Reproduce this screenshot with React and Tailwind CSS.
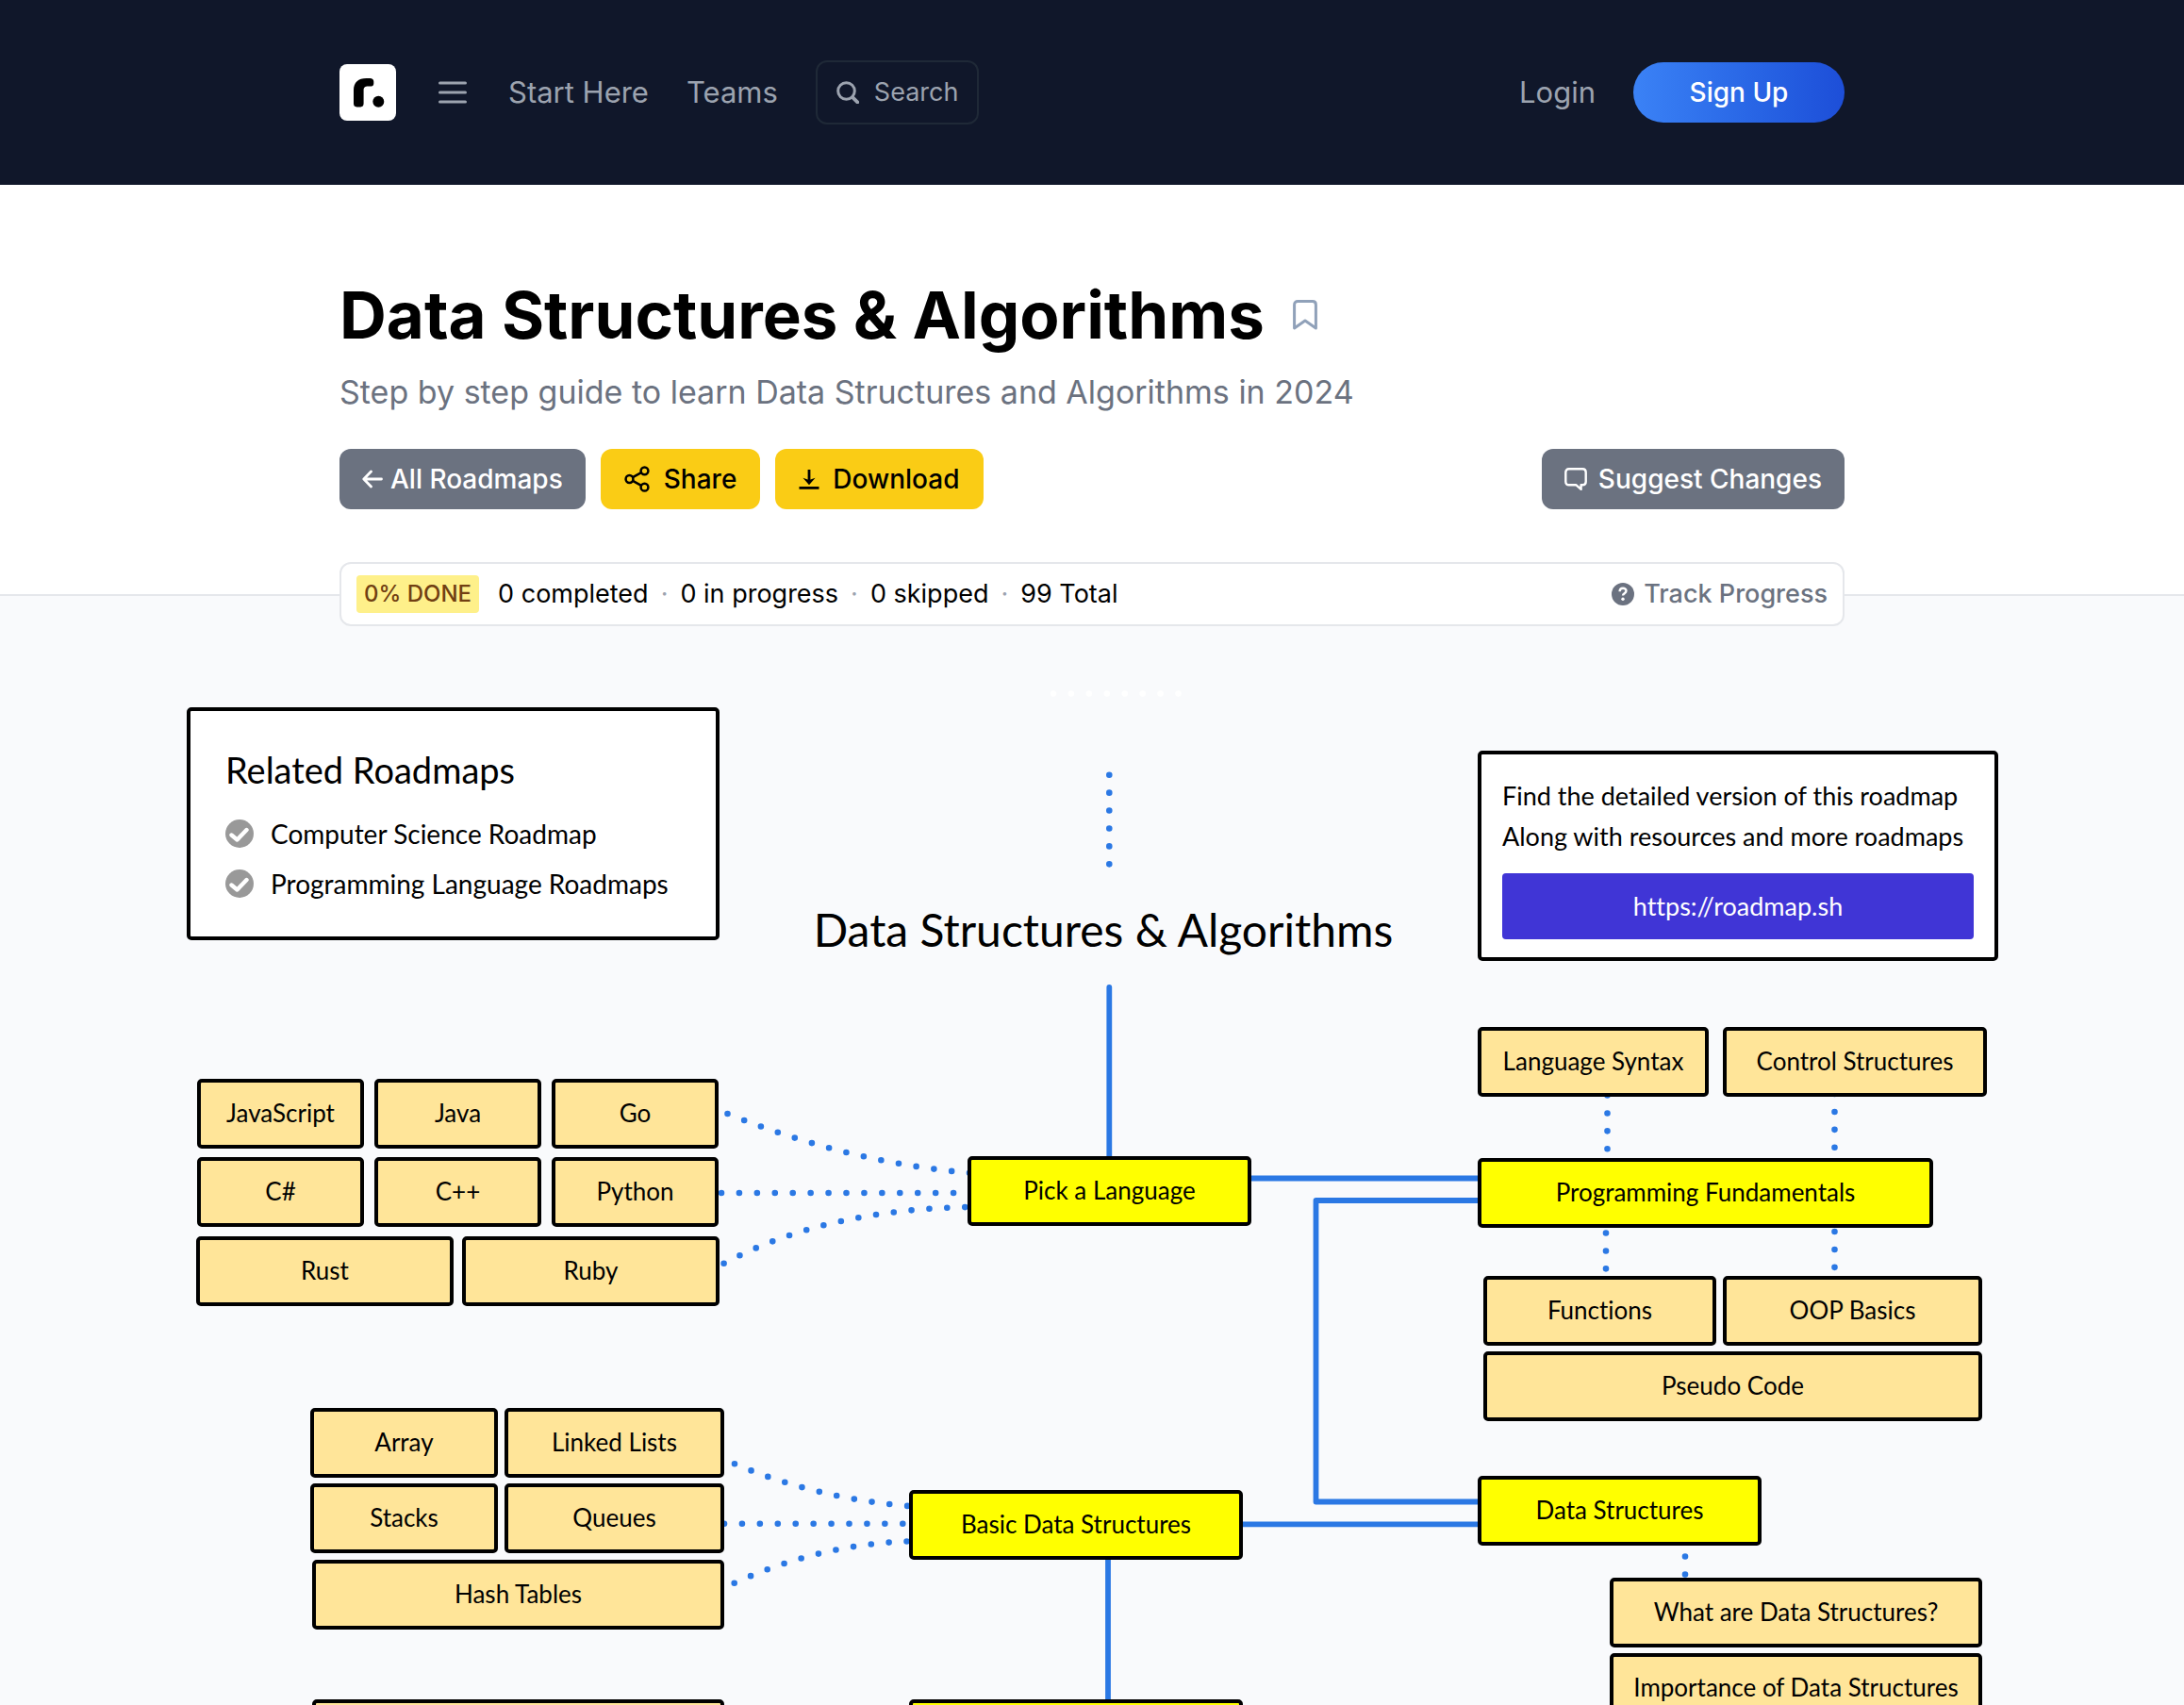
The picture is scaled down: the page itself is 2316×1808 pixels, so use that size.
import React from "react";

const SANS = "font-['Inter',sans-serif]";
const HAND = "font-['Lato',sans-serif] [font-variant-ligatures:none]";

function Logo() {
  return (
    <svg viewBox="0 0 60 60" className="size-[60px]" role="img" aria-label="roadmap.sh">
      <rect width="60" height="60" rx="8" fill="#fff" />
      <path
        fill="#000"
        d="M15 27.500C15 19.500 20 15 28.500 15h3.800c2.500 0 4 1.300 4 3.600v1.800c0 2.300-1.500 3.200-3.800 3.200h-2.300c-3 0-4.600 1-4.600 4.200v14c0 2.200-1.100 3.600-3.300 3.600h-3.900c-2.300 0-3.400-1.400-3.400-3.600z"
      />
      <circle cx="41.300" cy="39.800" r="6" fill="#000" />
    </svg>
  );
}

function MenuIcon() {
  return (
    <svg viewBox="0 0 30 26" className="h-[26px] w-[30px]" stroke="currentColor" strokeWidth="3" strokeLinecap="round" aria-hidden="true">
      <path d="M1.500 3h27M1.500 13h27M1.500 23h27" />
    </svg>
  );
}

function SearchIcon() {
  return (
    <svg viewBox="0 0 24 24" className="size-6" fill="none" stroke="currentColor" strokeWidth="3" strokeLinecap="round" aria-hidden="true">
      <circle cx="10.500" cy="10.500" r="8.800" />
      <path d="M17 17.200l5.300 5.200" strokeWidth="3.800" />
    </svg>
  );
}

function BookmarkIcon() {
  return (
    <svg viewBox="0 0 26 32" className="h-8 w-[26px]" fill="none" stroke="currentColor" strokeWidth="3" strokeLinecap="round" strokeLinejoin="round" aria-hidden="true">
      <path d="M1.600 30V5.200c0-2.200 1.300-3.600 3.600-3.600h15.600c2.300 0 3.600 1.400 3.600 3.600V30L13 22z" />
    </svg>
  );
}

function ArrowLeftIcon() {
  return (
    <svg viewBox="0 0 22 20" className="h-5 w-[22px]" fill="none" stroke="currentColor" strokeWidth="2.800" strokeLinecap="round" strokeLinejoin="round" aria-hidden="true">
      <path d="M9.500 2L1.800 10l7.700 8M2 10h18.500" />
    </svg>
  );
}

function ShareIcon() {
  return (
    <svg viewBox="0 0 28 28" className="size-7" fill="none" stroke="currentColor" strokeWidth="2.500" aria-hidden="true">
      <circle cx="5.500" cy="14" r="3.900" />
      <circle cx="21.500" cy="5.300" r="3.900" />
      <circle cx="21.500" cy="22.700" r="3.900" />
      <path d="M9 12.100l9-4.900M9 15.900l9 4.900" />
    </svg>
  );
}

function DownloadIcon() {
  return (
    <svg viewBox="0 0 22 22" className="size-[22px]" fill="none" stroke="currentColor" strokeWidth="2.800" aria-hidden="true">
      <path d="M11 1v13" />
      <path d="M11 17.200l-6.600-7.500 6.600 2.400 6.600-2.400z" fill="currentColor" stroke="none" />
      <path d="M0.500 20.400h21" />
    </svg>
  );
}

function CommentIcon() {
  return (
    <svg viewBox="0 0 24 25" className="h-[25px] w-6" fill="none" stroke="currentColor" strokeWidth="2.400" strokeLinecap="round" strokeLinejoin="round" aria-hidden="true">
      <path d="M4.800 1.300h14.400c2.300 0 3.500 1.300 3.500 3.500v9.900c0 2.300-1.200 3.500-3.500 3.500h-1.600v4.700l-5.400-4.700H4.800c-2.300 0-3.500-1.200-3.500-3.500V4.800c0-2.200 1.200-3.500 3.500-3.500z" />
    </svg>
  );
}

function HelpIcon() {
  return (
    <svg viewBox="0 0 24 24" className="size-6" fill="none" aria-hidden="true">
      <circle cx="12" cy="12" r="12" fill="currentColor" />
      <path d="M8.600 9.200c0-4.500 6.900-4.400 6.900-.6 0 2.600-3.500 2.700-3.500 5" stroke="#fff" strokeWidth="2.400" />
      <circle cx="12" cy="17.300" r="1.700" fill="#fff" />
    </svg>
  );
}

function CheckBadge() {
  return (
    <svg viewBox="0 0 30 30" className="size-[30px] shrink-0" aria-hidden="true">
      <circle cx="15" cy="15" r="15" fill="#999" />
      <path d="M6.500 16.500l6 5L22.500 11" fill="none" stroke="#fff" strokeWidth="4.400" strokeLinecap="round" strokeLinejoin="round" />
    </svg>
  );
}

function Header() {
  return (
    <header className="bg-[#10172a] text-[#9ca3af]">
      <div className="mx-auto flex h-[196px] max-w-[1596px] items-center text-[31px]">
        <a href="#home"><Logo /></a>
        <button type="button" aria-label="Menu" className="ml-[45px]"><MenuIcon /></button>
        <a href="#start" className="ml-[44px]">Start Here</a>
        <a href="#teams" className="ml-10">Teams</a>
        <button type="button" className="ml-10 flex h-[68px] items-center gap-4 rounded-xl border-2 border-[#1f2937] px-5 text-[27px]">
          <SearchIcon />
          Search
        </button>
        <a href="#login" className="ml-auto">Login</a>
        <a href="#signup" className="ml-10 flex h-16 w-[224px] items-center justify-center rounded-full bg-linear-to-r from-[#3b82f6] to-[#1d4ed8] text-[28px] font-medium text-white">
          Sign Up
        </a>
      </div>
    </header>
  );
}

function Hero() {
  const btn = "flex h-16 items-center rounded-xl text-[28px] font-medium";
  const dot = <span className="text-[#9ca3af]">·</span>;
  return (
    <section className="border-b-2 border-[#e5e7eb] bg-white">
      <div className="mx-auto max-w-[1596px] pt-[98px]">
        <div className="flex items-center gap-[30px]">
          <h1 className="text-[69px] leading-[80px] font-bold text-black">Data Structures &amp; Algorithms</h1>
          <button type="button" aria-label="Bookmark" className="text-slate-400"><BookmarkIcon /></button>
        </div>
        <p className="mt-[14px] text-[34px] leading-[56px] text-[#6b7280]">
          Step by step guide to learn Data Structures and Algorithms in 2024
        </p>
        <div className="mt-8 flex gap-4">
          <a href="#roadmaps" className={btn + " gap-2 bg-[#6b7280] px-6 text-white"}><ArrowLeftIcon />All Roadmaps</a>
          <button type="button" className={btn + " gap-[14px] bg-[#facc15] px-[25px] text-black"}><ShareIcon />Share</button>
          <button type="button" className={btn + " gap-[14px] bg-[#facc15] px-[25px] text-black"}><DownloadIcon />Download</button>
          <a href="#suggest" className={btn + " ml-auto gap-3 bg-[#6b7280] px-6 text-white"}><CommentIcon />Suggest Changes</a>
        </div>
        <div className="relative z-10 mt-14 -mb-[34px] flex h-[68px] items-center rounded-xl border-2 border-[#e5e7eb] bg-white px-4 text-[27px] text-black">
          <span className="mr-5 flex h-10 items-center rounded-sm bg-[#fef08a] px-2 text-[24px] font-medium text-[#713f12]">0% DONE</span>
          <p className="flex gap-[13px]">
            <span>0 completed</span>{dot}
            <span>0 in progress</span>{dot}
            <span>0 skipped</span>{dot}
            <span>99 Total</span>
          </p>
          <button type="button" className="ml-auto flex items-center gap-[10px] text-[27px] font-medium text-[#6b7280]">
            <HelpIcon />
            Track Progress
          </button>
        </div>
      </div>
    </section>
  );
}

const topics = [
  { label: "JavaScript", box: "left-[51px] top-[512px] w-[177px]" },
  { label: "Java", box: "left-[239px] top-[512px] w-[177px]" },
  { label: "Go", box: "left-[427px] top-[512px] w-[177px]" },
  { label: "C#", box: "left-[51px] top-[595px] w-[177px]" },
  { label: "C++", box: "left-[239px] top-[595px] w-[177px]" },
  { label: "Python", box: "left-[427px] top-[595px] w-[177px]" },
  { label: "Rust", box: "left-[50px] top-[679px] w-[273px]" },
  { label: "Ruby", box: "left-[332px] top-[679px] w-[273px]" },
  { label: "Pick a Language", main: true, box: "left-[868px] top-[594px] w-[301px]" },
  { label: "Language Syntax", box: "left-[1409px] top-[457px] w-[245px]" },
  { label: "Control Structures", box: "left-[1669px] top-[457px] w-[280px]" },
  { label: "Programming Fundamentals", main: true, box: "left-[1409px] top-[596px] w-[483px]" },
  { label: "Functions", box: "left-[1415px] top-[721px] w-[247px]" },
  { label: "OOP Basics", box: "left-[1669px] top-[721px] w-[275px]" },
  { label: "Pseudo Code", box: "left-[1415px] top-[801px] w-[529px]" },
  { label: "Array", box: "left-[171px] top-[861px] w-[199px]" },
  { label: "Linked Lists", box: "left-[377px] top-[861px] w-[233px]" },
  { label: "Stacks", box: "left-[171px] top-[941px] w-[199px]" },
  { label: "Queues", box: "left-[377px] top-[941px] w-[233px]" },
  { label: "Hash Tables", box: "left-[173px] top-[1022px] w-[437px]" },
  { label: "Basic Data Structures", main: true, box: "left-[806px] top-[948px] w-[354px]" },
  { label: "Data Structures", main: true, box: "left-[1409px] top-[933px] w-[301px]" },
  { label: "What are Data Structures?", box: "left-[1549px] top-[1041px] w-[395px]" },
  { label: "Importance of Data Structures", box: "left-[1549px] top-[1121px] w-[395px]" },
  { label: "", box: "left-[173px] top-[1170px] w-[437px]" },
  { label: "", main: true, box: "left-[806px] top-[1170px] w-[354px]" },
];

function Topic({ label, main, box }) {
  const cls = `absolute h-[74px] rounded-[5px] border-4 border-black pb-0.5 text-center text-[26px] whitespace-nowrap text-black ${main ? "bg-[#ffff00]" : "bg-[#ffe599]"} ${box}`;
  return label ? <button type="button" className={cls}>{label}</button> : <div className={cls} />;
}

function Connectors() {
  return (
    <svg viewBox="158 632 2000 1176" className="absolute inset-0 size-full" fill="none" stroke="#2b78e4" strokeLinecap="round" aria-hidden="true">
      <g strokeWidth="5.800">
        <path d="M1176.300 1047V1230" />
        <path d="M1324 1249.500H1570" />
        <path d="M1570 1273H1395.500V1592.500H1570" strokeLinejoin="round" />
        <path d="M1316 1616.300H1570" />
        <path d="M1175 1650V1806" />
      </g>
      <g strokeWidth="6.600" strokeDasharray="0 18.930">
        <path d="M1117 735.500H1250" stroke="#fff" />
        <path d="M1176.300 821.700V918" />
        <path d="M771.500 1181Q903 1234 1034 1244.200" />
        <path d="M765 1265H1014" />
        <path d="M767.600 1339.700Q876 1282 1030 1280" />
        <path d="M1704.500 1161.500V1220" />
        <path d="M1945.500 1160V1218" />
        <path d="M1703 1307.500V1347" />
        <path d="M1945.500 1306V1345" />
        <path d="M779 1552.300Q867 1589.500 967 1597.300" />
        <path d="M768 1615.700H960" />
        <path d="M778.700 1678.700Q870 1637 967 1634.300" />
        <path d="M1787 1650.500V1671" />
      </g>
    </svg>
  );
}

function Roadmap() {
  return (
    <main className="overflow-hidden">
      <div className={"relative mx-auto h-[1176px] w-[2000px] overflow-hidden text-black " + HAND}>
        <Connectors />
        {topics.map((t, i) => <Topic key={i} {...t} />)}

        <section className="absolute top-[118px] left-[40px] h-[247px] w-[565px] rounded-[5px] border-4 border-black bg-white px-[37px] pt-[36px]">
          <h2 className="text-[38px] leading-[52px]">Related Roadmaps</h2>
          <ul className="mt-[27px] text-[28px]">
            <li className="flex h-[53px] items-start"><a href="#cs" className="flex items-center gap-[18px] leading-[30px]"><CheckBadge />Computer Science Roadmap</a></li>
            <li className="flex h-[53px] items-start"><a href="#languages" className="flex items-center gap-[18px] leading-[30px]"><CheckBadge />Programming Language Roadmaps</a></li>
          </ul>
        </section>

        <h2 className="absolute top-[324px] left-[612px] w-[800px] text-center text-[48px] leading-[60px]">Data Structures &amp; Algorithms</h2>

        <section className="absolute top-[164px] left-[1409px] h-[223px] w-[552px] rounded-[5px] border-4 border-black bg-white px-[22px] pt-[22px] text-[27px]">
          <p className="leading-[43px] whitespace-nowrap">Find the detailed version of this roadmap<br />Along with resources and more roadmaps</p>
          <a href="https://roadmap.sh" className="mt-[18px] flex h-[70px] items-center justify-center rounded-sm bg-[#4035d6] text-white">https://roadmap.sh</a>
        </section>
      </div>
    </main>
  );
}

export default function App() {
  return (
    <div className={"bg-[#f9fafc] " + SANS}>
      <Header />
      <Hero />
      <Roadmap />
    </div>
  );
}
